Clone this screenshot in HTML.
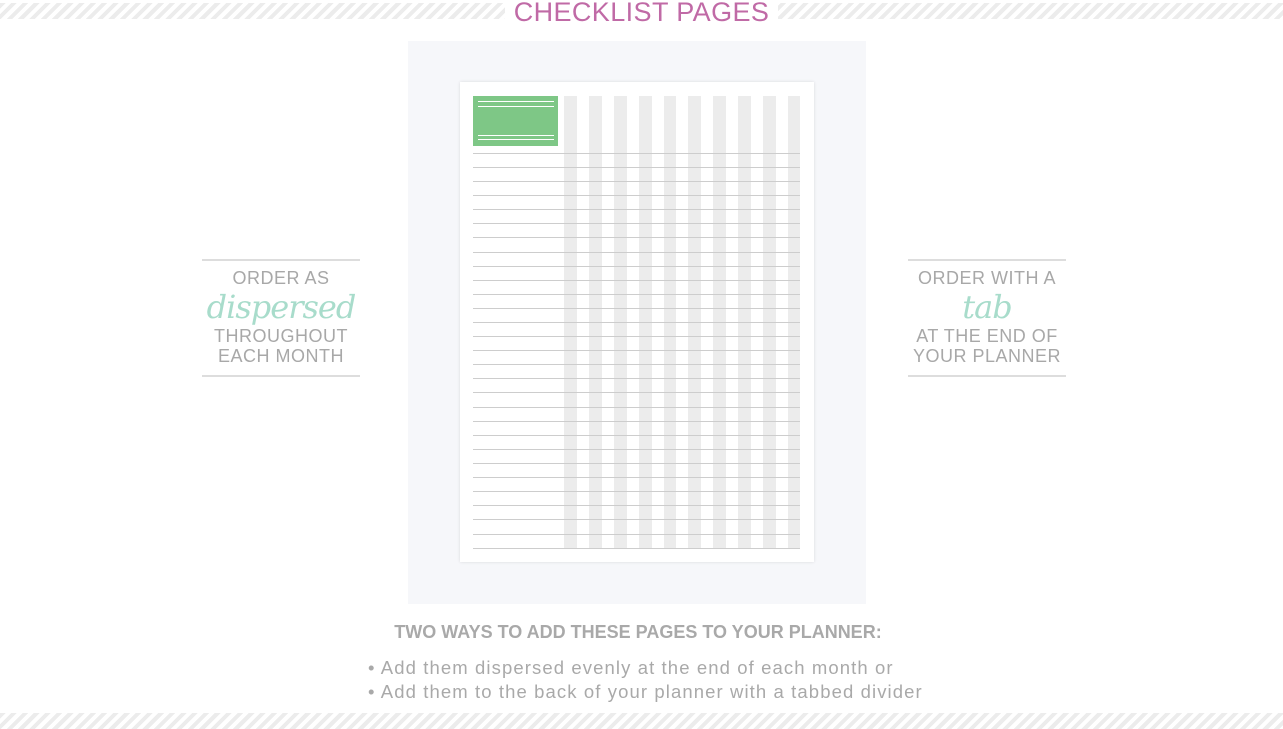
<!DOCTYPE html>
<html><head><style>
body{margin:0;width:1283px;height:729px;background:#fff;position:relative;overflow:hidden;font-family:"Liberation Sans",sans-serif}
.stripe{position:absolute;left:0;width:1283px;background:repeating-linear-gradient(135deg,#ececec 0 4px,#fff 4px 8px)}
.abs{position:absolute}
.side{position:absolute;width:158px;border-top:2px solid #ddd;border-bottom:2px solid #ddd;text-align:center;color:#a8a8a8;font-size:18px;letter-spacing:0.5px;line-height:20px;padding:7px 0 9px;white-space:nowrap}
.script{color:#a8dccb;font-family:"DejaVu Serif",serif;font-style:italic;font-size:32px;line-height:38px;letter-spacing:-1px}
</style></head><body>
<div class="stripe" style="top:3px;height:16px"></div>
<div class="stripe" style="top:713px;height:16px"></div>
<div class="abs" style="left:505px;top:0;width:273px;height:24px;background:#fff"></div>
<div class="abs" style="left:450px;top:-3px;width:383px;text-align:center;color:#c06aa6;font-size:27px;letter-spacing:0.4px;white-space:nowrap">CHECKLIST PAGES</div>
<div class="abs" style="left:408px;top:41px;width:458px;height:563px;background:#f6f7fa"></div>
<div class="abs" style="left:460px;top:82px;width:354px;height:480px;background:#fff;box-shadow:0 0 3px rgba(0,0,0,.12)"></div>
<svg class="abs" style="left:0;top:0" width="1283" height="729">
<g fill="#ececec">
<rect x="564" y="96" width="13" height="452"/><rect x="589" y="96" width="13" height="452"/><rect x="614" y="96" width="13" height="452"/><rect x="639" y="96" width="13" height="452"/><rect x="664" y="96" width="12" height="452"/><rect x="688" y="96" width="13" height="452"/><rect x="713" y="96" width="13" height="452"/><rect x="738" y="96" width="13" height="452"/><rect x="763" y="96" width="13" height="452"/><rect x="788" y="96" width="12" height="452"/>
</g>
<rect x="473" y="96" width="85" height="50" fill="#7ec786"/>
<g stroke="#fff" stroke-width="1"><line x1="478" y1="101.5" x2="554" y2="101.5"/><line x1="478" y1="106.5" x2="554" y2="106.5"/><line x1="478" y1="135.5" x2="554" y2="135.5"/><line x1="478" y1="139.5" x2="554" y2="139.5"/></g>
<g stroke="#cdcdcd" stroke-width="1">
<line x1="473" x2="800" y1="153.5" y2="153.5"/><line x1="473" x2="800" y1="167.5" y2="167.5"/><line x1="473" x2="800" y1="181.5" y2="181.5"/><line x1="473" x2="800" y1="195.5" y2="195.5"/><line x1="473" x2="800" y1="209.5" y2="209.5"/><line x1="473" x2="800" y1="223.5" y2="223.5"/><line x1="473" x2="800" y1="237.5" y2="237.5"/><line x1="473" x2="800" y1="252.5" y2="252.5"/><line x1="473" x2="800" y1="266.5" y2="266.5"/><line x1="473" x2="800" y1="280.5" y2="280.5"/><line x1="473" x2="800" y1="294.5" y2="294.5"/><line x1="473" x2="800" y1="308.5" y2="308.5"/><line x1="473" x2="800" y1="322.5" y2="322.5"/><line x1="473" x2="800" y1="336.5" y2="336.5"/><line x1="473" x2="800" y1="350.5" y2="350.5"/><line x1="473" x2="800" y1="364.5" y2="364.5"/><line x1="473" x2="800" y1="378.5" y2="378.5"/><line x1="473" x2="800" y1="392.5" y2="392.5"/><line x1="473" x2="800" y1="407.5" y2="407.5"/><line x1="473" x2="800" y1="421.5" y2="421.5"/><line x1="473" x2="800" y1="435.5" y2="435.5"/><line x1="473" x2="800" y1="449.5" y2="449.5"/><line x1="473" x2="800" y1="463.5" y2="463.5"/><line x1="473" x2="800" y1="477.5" y2="477.5"/><line x1="473" x2="800" y1="491.5" y2="491.5"/><line x1="473" x2="800" y1="505.5" y2="505.5"/><line x1="473" x2="800" y1="519.5" y2="519.5"/><line x1="473" x2="800" y1="534.5" y2="534.5"/><line x1="473" x2="800" y1="548.5" y2="548.5"/>
</g></svg>
<div class="side" style="left:202px;top:259px">ORDER AS<div class="script">dispersed</div>THROUGHOUT<br>EACH MONTH</div>
<div class="side" style="left:908px;top:259px">ORDER WITH A<div class="script">tab</div>AT THE END OF<br>YOUR PLANNER</div>
<div class="abs" style="left:300px;top:622px;width:676px;text-align:center;color:#a9a9a9;font-size:18px;font-weight:bold;white-space:nowrap">TWO WAYS TO ADD THESE PAGES TO YOUR PLANNER:</div>
<div class="abs" style="left:368px;top:656px;color:#a9a9a9;font-size:18.5px;line-height:24px;letter-spacing:1.1px;white-space:nowrap">• Add them dispersed evenly at the end of each month or<br>• Add them to the back of your planner with a tabbed divider</div>
</body></html>
